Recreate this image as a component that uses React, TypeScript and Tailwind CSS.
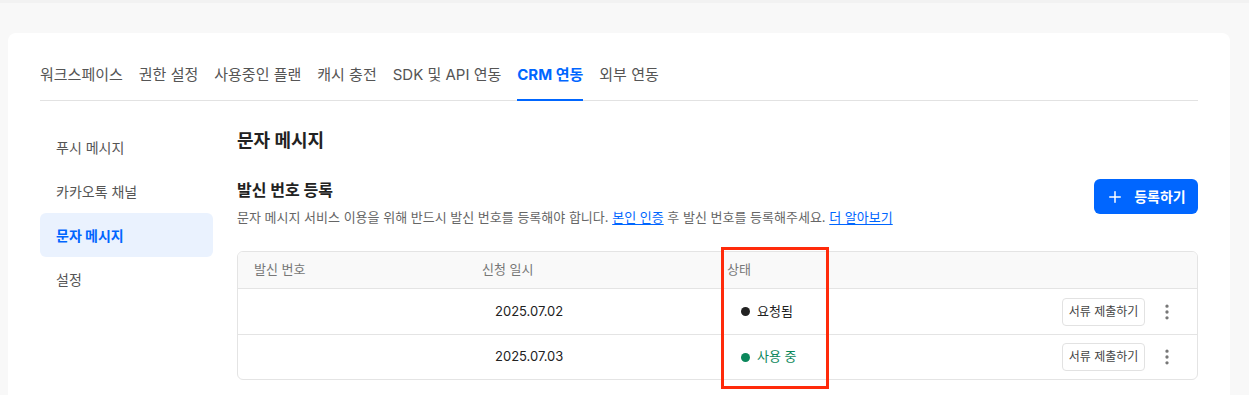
import { Plus, EllipsisVertical } from "lucide-react";

const tabs = ["워크스페이스", "권한 설정", "사용중인 플랜", "캐시 충전", "SDK 및 API 연동", "CRM 연동", "외부 연동"];
const menu = ["푸시 메시지", "카카오톡 채널", "문자 메시지", "설정"];

const rows = [
  { date: "2025.07.02", status: "요청됨", done: false },
  { date: "2025.07.03", status: "사용 중", done: true },
];

const App = () => {
  return (
    <div
      className="relative h-[395px] w-full overflow-hidden bg-[#f8f8f8] text-[#222]"
      style={{ fontFamily: 'Inter, "Noto Sans CJK KR", sans-serif' }}
    >
      <div className="h-[3px] bg-[#f2f2f2]" />

      <div className="ml-[8px] mt-[30px] h-[420px] w-[1222px] rounded-lg bg-white px-[32px] pt-[31px]">
        {/* 탭 */}
        <div className="flex gap-4 border-b border-[#e2e2e2]">
          {tabs.map((tab) => (
            <div
              key={tab}
              className={
                tab === "CRM 연동"
                  ? "-mb-px border-b-2 border-[#0066ff] pb-[12px] text-[15px] font-bold leading-[22px] text-[#0066ff]"
                  : "pb-[14px] text-[15px] leading-[22px] text-[#555]"
              }
            >
              {tab}
            </div>
          ))}
        </div>

        <div className="flex gap-6 pt-[24px]">
          {/* 사이드 메뉴 */}
          <div className="w-[173px] shrink-0">
            {menu.map((item) => (
              <div
                key={item}
                className={
                  item === "문자 메시지"
                    ? "flex h-[44px] items-center rounded-md bg-[#eaf2fe] px-4 text-[14px] font-bold text-[#0066ff]"
                    : "flex h-[44px] items-center px-4 text-[14px] text-[#555]"
                }
              >
                {item}
              </div>
            ))}
          </div>

          {/* 본문 */}
          <div className="flex-1 pt-[3px]">
            <h1 className="text-[18px] font-bold leading-[26px] text-[#222]">문자 메시지</h1>

            <div className="mt-[24px] flex items-start justify-between">
              <div>
                <h2 className="text-[16px] font-bold leading-[24px] text-[#222]">발신 번호 등록</h2>
                <p className="mt-[5px] text-[13px] leading-[20px] text-[#666]">
                  문자 메시지 서비스 이용을 위해 반드시 발신 번호를 등록해야 합니다.{" "}
                  <a className="text-[#0066ff] underline underline-offset-2">본인 인증</a> 후 발신 번호를 등록해주세요.{" "}
                  <a className="text-[#0066ff] underline underline-offset-2">더 알아보기</a>
                </p>
              </div>
              <button className="mt-[1px] flex h-[35px] w-[104px] items-center justify-center gap-[10px] rounded-md bg-[#0066ff] text-[14px] font-bold text-white">
                <Plus size={18} strokeWidth={2} />
                등록하기
              </button>
            </div>

            {/* 테이블 */}
            <div className="mt-[24px] overflow-hidden rounded-md border border-[#e4e4e4]">
              <div className="grid h-[37px] grid-cols-[244px_245px_1fr] items-center border-b border-[#e4e4e4] bg-[#f9f9f9] text-[13px] text-[#777]">
                <div className="pl-[16px]">발신 번호</div>
                <div>신청 일시</div>
                <div>상태</div>
              </div>
              {rows.map((row, i) => (
                <div
                  key={row.date}
                  className={`grid h-[45px] grid-cols-[244px_245px_1fr_auto] items-center text-[13px] ${
                    i > 0 ? "border-t border-[#e4e4e4]" : ""
                  }`}
                >
                  <div />
                  <div className="pl-[13px] text-[#222]">{row.date}</div>
                  <div
                    className={`flex items-center gap-[7px] pl-[14px] ${
                      row.done ? "text-[#0b875b]" : "text-[#222]"
                    }`}
                  >
                    <span
                      className={`h-[9px] w-[9px] rounded-full ${row.done ? "bg-[#0b875b]" : "bg-[#222]"}`}
                    />
                    {row.status}
                  </div>
                  <div className="flex items-center gap-[12px] pr-[20px]">
                    <button className="h-[28px] w-[83px] rounded border border-[#e2e2e2] bg-white text-[12px] text-[#444]">
                      서류 제출하기
                    </button>
                    <EllipsisVertical size={20} className="text-[#777]" />
                  </div>
                </div>
              ))}
            </div>
          </div>
        </div>
      </div>

      {/* 빨간 표시 */}
      <div className="pointer-events-none absolute left-[721px] top-[247px] h-[142px] w-[108px] border-[3px] border-[#ff2a0a]" />
    </div>
  );
};

export default App;
